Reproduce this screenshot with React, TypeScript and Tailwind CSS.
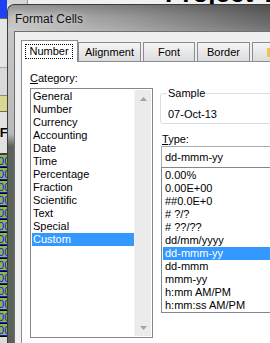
import { ReactNode } from "react";

const categories = [
  "General",
  "Number",
  "Currency",
  "Accounting",
  "Date",
  "Time",
  "Percentage",
  "Fraction",
  "Scientific",
  "Text",
  "Special",
  "Custom",
];

const types = [
  "0.00%",
  "0.00E+00",
  "##0.0E+0",
  "# ?/?",
  "# ??/??",
  "dd/mm/yyyy",
  "dd-mmm-yy",
  "dd-mmm",
  "mmm-yy",
  "h:mm AM/PM",
  "h:mm:ss AM/PM",
];

const greenRows = Array.from({ length: 14 }, (_, i) => i);

// sliver of the spreadsheet left of the dialog
function ExcelStrip() {
  return (
    <div className="flex w-[7px] shrink-0 flex-col overflow-hidden bg-[#dcdcdc]">
      <div className="h-[18px] shrink-0 bg-[#1f3ff2]" />
      <div className="h-px shrink-0 bg-[#6d6d6d]" />
      <div className="h-[49px] shrink-0 border-b border-[#a8a8a8] bg-[#e4e4e4]" />
      <div className="h-[28px] shrink-0 border-b border-[#8a8a8a] bg-[#d9d9d9]" />
      <div className="h-[16px] shrink-0 border-b border-[#6f6f50] bg-[#d8d88e]" />
      <div className="flex h-[41px] shrink-0 items-center bg-[#e2e2e2]">
        <span className="-ml-[9px] whitespace-nowrap text-[13px] font-bold">EF</span>
      </div>
      <div className="h-[2px] shrink-0 bg-[#3c3c3c]" />
      {greenRows.map((i) => (
        <div
          key={i}
          className="flex h-[13px] shrink-0 items-center border-b border-black bg-[#90b548]"
        >
          <span className="-ml-[8px] whitespace-nowrap text-[11px] text-[#1414e6] underline">
            100
          </span>
        </div>
      ))}
    </div>
  );
}

function Arrow({ down }: { down?: boolean }) {
  return (
    <div className="flex h-[17px] items-center justify-center">
      <svg width="7" height="4" viewBox="0 0 7 4">
        <path d={down ? "M0 0h7L3.5 4z" : "M0 4h7L3.5 0z"} fill="#a3a3a3" />
      </svg>
    </div>
  );
}

function Tab({ children, width, gap }: { children: ReactNode; width: string; gap?: boolean }) {
  return (
    <div
      className={`flex h-[19px] shrink-0 items-center justify-center border border-b-0 border-[#898c95] bg-gradient-to-b from-[#f5f5f5] to-[#dcdcdc] ${width} ${gap ? "ml-[2px]" : ""}`}
    >
      {children}
    </div>
  );
}

export default function App() {
  return (
    <div className="flex h-[343px] w-[270px] overflow-hidden bg-[#e6e6e6] text-[11px] leading-[13px] text-black [font-family:'Liberation_Sans',Arial,sans-serif]">
      <ExcelStrip />
      <div className="flex min-w-0 flex-1 flex-col">
        {/* top of the sheet showing above the window */}
        <div className="flex h-[4px] shrink-0 overflow-hidden bg-[#f0f0f0]">
          <div className="w-[21px] shrink-0 border-r border-[#9a9a9a] bg-[#d6d6d6]" />
          <span className="-mt-[21px] ml-[137px] whitespace-nowrap text-[26px] font-bold leading-[28px]">
            Project Ta
          </span>
        </div>

        {/* window */}
        <div className="flex flex-1 flex-col overflow-hidden rounded-tl-[7px] border-l border-t border-[#3d3d3d] bg-gradient-to-r from-[#c9c9c9] via-[#a2a2a2] via-[45%] to-[#6a6a6a]">
          <div className="flex h-[26px] shrink-0 items-center bg-gradient-to-b from-black/25 via-black/5 to-white/10 pl-[7px] pt-[2px]">
            <span className="text-[12px] text-[#111] [text-shadow:0_0_6px_rgba(255,255,255,0.95)]">
              Format Cells
            </span>
          </div>

          <div className="flex flex-1">
            <div className="w-[6px] shrink-0 bg-gradient-to-b from-[#c6c6c6] via-[#bababa] via-[33%] to-[#5b6259] to-[37%]" />

            {/* client area */}
            <div className="flex min-w-0 flex-1 flex-col border-l border-t border-[#6f6f6f] bg-[#f0f0f0] pl-[6px] pt-[8px]">
              <div className="flex h-[21px] shrink-0 items-end">
                <div className="relative z-10 -mb-px h-[22px] w-[57px] shrink-0 border border-b-0 border-[#898c95] bg-white">
                  <div className="ml-[3px] mt-[3px] flex h-[15px] w-[48px] items-center justify-center border border-dotted border-black">
                    Number
                  </div>
                </div>
                <Tab width="w-[63px]">Alignment</Tab>
                <Tab width="w-[52px]" gap>
                  Font
                </Tab>
                <Tab width="w-[53px]" gap>
                  Border
                </Tab>
                <Tab width="w-[40px]" gap>
                  <span className="ml-[14px] h-[9px] w-[4px] bg-[#f0c060]" />
                  <span className="flex-1" />
                </Tab>
              </div>

              {/* tab page */}
              <div className="flex flex-1 border-l border-t border-[#898c95] bg-white">
                <div className="ml-[8px] mt-[10px] flex shrink-0 flex-col">
                  <div className="h-[14px]">
                    <span className="underline">C</span>ategory:
                  </div>
                  <div className="mt-[2px] flex h-[250px] w-[123px] border border-[#828790] p-px">
                    <div className="flex flex-1 flex-col">
                      {categories.map((c) => (
                        <div
                          key={c}
                          className={`h-[13px] pl-px ${c === "Custom" ? "bg-[#3399ff] text-white" : ""}`}
                        >
                          {c}
                        </div>
                      ))}
                    </div>
                    <div className="flex w-[17px] shrink-0 flex-col justify-between border-l border-[#f4f4f4] bg-[#ebebeb]">
                      <Arrow />
                      <Arrow down />
                    </div>
                  </div>
                </div>

                <div className="ml-[7px] mt-[31px] flex w-[140px] shrink-0 flex-col">
                  <div className="h-[31px] rounded-[3px] border border-[#d5dfe5] pl-[7px]">
                    <div className="-ml-px -mt-[7px] w-fit bg-white px-px">Sample</div>
                    <div className="mt-[8px]">07-Oct-13</div>
                  </div>
                  <div className="ml-[2px] mt-[9px] h-[13px]">
                    <span className="underline">T</span>ype:
                  </div>
                  <div className="ml-px flex h-[21px] items-center border-x border-t border-[#a5acb5] pl-[3px]">
                    dd-mmm-yy
                  </div>
                  <div className="ml-px h-[146px] border border-[#828790] p-px">
                    {types.map((t) => (
                      <div
                        key={t}
                        className={`h-[13px] whitespace-nowrap pl-[2px] ${t === "dd-mmm-yy" ? "bg-[#3399ff] text-white" : ""}`}
                      >
                        {t}
                      </div>
                    ))}
                  </div>
                </div>
              </div>
            </div>
          </div>
        </div>
      </div>
    </div>
  );
}
